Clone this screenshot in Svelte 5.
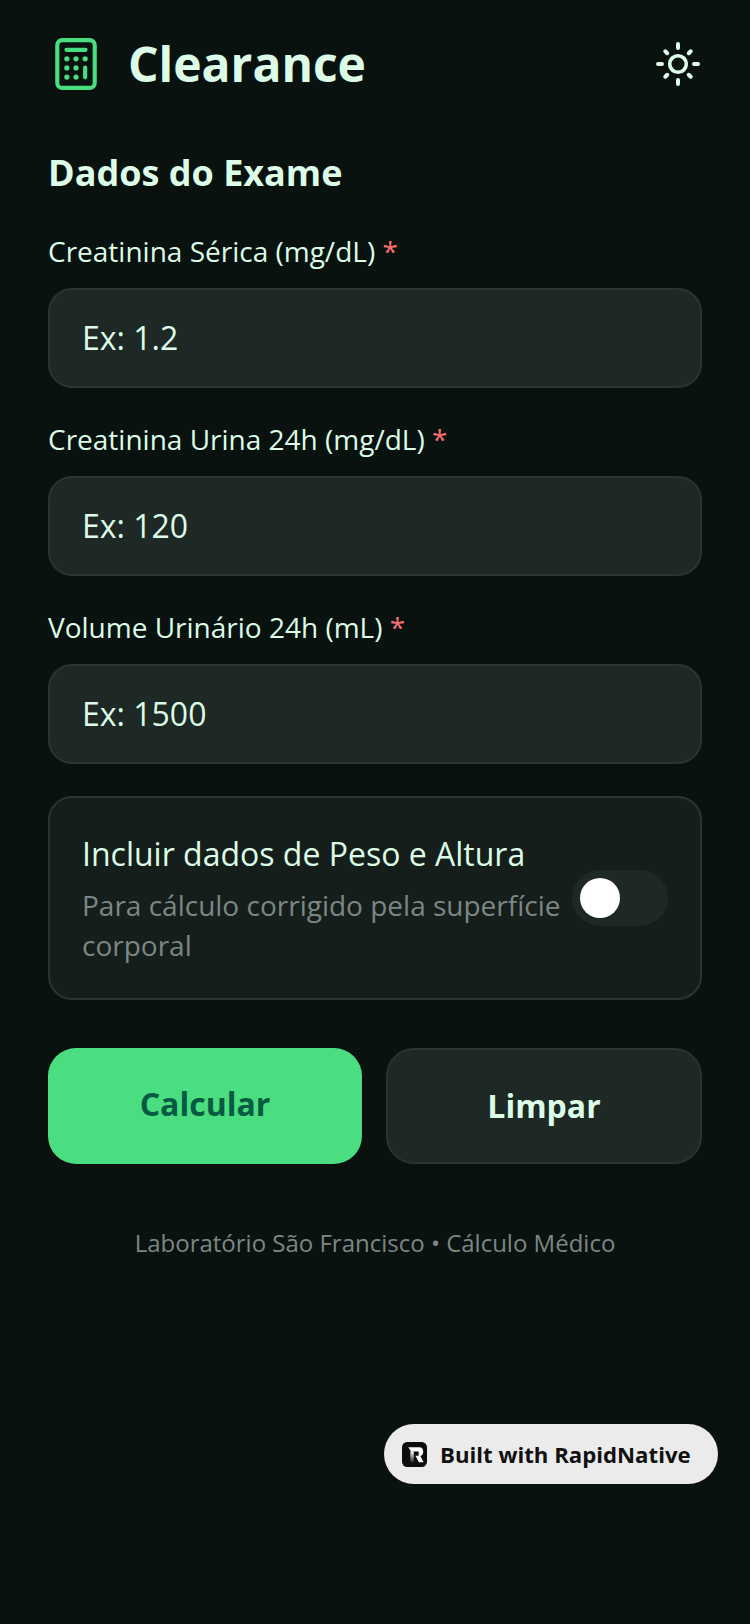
<script lang="ts">
	const fields = [
		{ label: 'Creatinina Sérica (mg/dL)', hint: 'Ex: 1.2' },
		{ label: 'Creatinina Urina 24h (mg/dL)', hint: 'Ex: 120' },
		{ label: 'Volume Urinário 24h (mL)', hint: 'Ex: 1500' }
	];
	const dots = [
		[5.6, 10], [10, 10], [14.4, 10],
		[5.6, 14.4], [10, 14.4],
		[5.6, 18.8], [10, 18.8]
	];
	const straight = [0, 90, 180, 270];
	const diagonal = [45, 135, 225, 315];
</script>

<div class="page">
	<header>
		<div class="brand">
			<svg class="calc" width="42" height="52" viewBox="0 0 20 25" fill="none">
				<rect x="1" y="1" width="18" height="23" rx="2.4" stroke="#4ade80" stroke-width="2" />
				<path d="M5.4 5.7H14.6" stroke="#4ade80" stroke-width="2" stroke-linecap="round" />
				{#each dots as [cx, cy]}
					<circle {cx} {cy} r="1.25" fill="#4ade80" />
				{/each}
				<path d="M14.4 14.2V18.9" stroke="#4ade80" stroke-width="2" stroke-linecap="round" />
			</svg>
			<h1>Clearance</h1>
		</div>
		<svg class="sun" width="48" height="48" viewBox="0 0 48 48" fill="none" stroke="#dcfce7" stroke-width="4" stroke-linecap="round">
			<circle cx="24" cy="24" r="8.3" stroke-width="3.6" />
			{#each straight as r}
				<path d="M24 4V8" transform={`rotate(${r} 24 24)`} />
			{/each}
			{#each diagonal as r}
				<path d="M24 6V8.8" transform={`rotate(${r} 24 24)`} />
			{/each}
		</svg>
	</header>

	<h2>Dados do Exame</h2>

	{#each fields as f}
		<div class="field">
			<div class="label">{f.label} <span class="req">*</span></div>
			<div class="input">{f.hint}</div>
		</div>
	{/each}

	<div class="card">
		<div class="card-text">
			<div class="card-title">Incluir dados de Peso e Altura</div>
			<div class="card-sub">Para cálculo corrigido pela superfície corporal</div>
		</div>
		<div class="toggle"><span class="knob"></span></div>
	</div>

	<div class="actions">
		<div class="btn primary"><span>Calcular</span></div>
		<div class="btn secondary"><span>Limpar</span></div>
	</div>

	<div class="foot">Laboratório São Francisco • Cálculo Médico</div>

	<div class="badge">
		<svg width="25" height="25" viewBox="0 0 24 24">
			<defs>
				<linearGradient id="stem" x1="0" y1="0" x2="0" y2="1">
					<stop offset="0" stop-color="#fff" />
					<stop offset="1" stop-color="#222" />
				</linearGradient>
			</defs>
			<rect width="24" height="24" rx="5" fill="#0d0d0d" />
			<path d="M6 5H16.5C19.3 5 20.4 7 20.4 9.3C20.4 11.5 19.3 13 17.6 13.4L20.8 19.5H16.3L12.8 13.2H16V9H8.8Z" fill="#fff" />
			<path d="M8 9H11.4V19.5H8Z" fill="url(#stem)" />
		</svg>
		<span>Built with RapidNative</span>
	</div>
</div>

<style>
	:global(body) {
		margin: 0;
		background: #0a120f;
	}

	.page {
		position: relative;
		box-sizing: border-box;
		width: 750px;
		height: 1624px;
		padding: 32px 48px 0;
		background: #0a120f;
		font-family: 'Open Sans', 'Noto Sans', sans-serif;
		color: #dcfce7;
	}

	header {
		display: flex;
		align-items: center;
		justify-content: space-between;
		height: 64px;
		margin-bottom: 53px;
	}

	.brand {
		display: flex;
		align-items: center;
		gap: 31px;
	}

	.calc {
		margin-left: 7px;
	}

	h1 {
		margin: 0;
		font-size: 48px;
		line-height: 64px;
		font-weight: 700;
	}

	h2 {
		margin: 0 0 34px;
		font-size: 36px;
		line-height: 48px;
		font-weight: 700;
	}

	.field {
		margin-bottom: 31px;
	}

	.label {
		font-size: 28px;
		line-height: 40px;
		margin-bottom: 17px;
	}

	.req {
		color: #f87171;
	}

	.input {
		box-sizing: border-box;
		height: 100px;
		padding: 0 32px 2px;
		display: flex;
		align-items: center;
		font-size: 32px;
		background: #1e2824;
		border: 2px solid #2a3430;
		border-radius: 24px;
	}

	.card {
		box-sizing: border-box;
		height: 204px;
		margin-top: 32px;
		padding: 0 32px;
		display: flex;
		align-items: center;
		background: #151e1a;
		border: 2px solid #2a3430;
		border-radius: 24px;
		margin-bottom: 48px;
	}

	.card-text {
		flex: 1;
	}

	.card-title {
		font-size: 32px;
		line-height: 44px;
		margin-bottom: 9px;
	}

	.card-sub {
		font-size: 28px;
		line-height: 40px;
		color: #7c8785;
	}

	.toggle {
		flex: none;
		box-sizing: border-box;
		width: 96px;
		height: 56px;
		padding: 8px;
		border-radius: 28px;
		background: #1e2824;
	}

	.knob {
		display: block;
		width: 40px;
		height: 40px;
		border-radius: 50%;
		background: #fff;
	}

	.actions {
		display: flex;
		gap: 24px;
		margin-bottom: 59px;
	}

	.btn {
		box-sizing: border-box;
		height: 116px;
		border-radius: 28px;
		display: flex;
		align-items: center;
		justify-content: center;
		font-size: 32px;
		font-weight: 700;
		padding-bottom: 2px;
	}

	.primary {
		flex: 0 0 314px;
		background: #4ade80;
		color: #055a41;
		padding-bottom: 6px;
	}

	.secondary {
		flex: 1;
		background: #1e2824;
		border: 2px solid #2a3430;
	}

	.foot {
		text-align: center;
		font-size: 24px;
		line-height: 40px;
		color: #7c8785;
	}

	.badge {
		position: absolute;
		left: 384px;
		top: 1424px;
		box-sizing: border-box;
		width: 334px;
		height: 60px;
		display: flex;
		align-items: center;
		gap: 13px;
		padding-left: 18px;
		border-radius: 30px;
		background: #ebebeb;
		color: #111;
		font-size: 22.2px;
		font-weight: 700;
	}
</style>
